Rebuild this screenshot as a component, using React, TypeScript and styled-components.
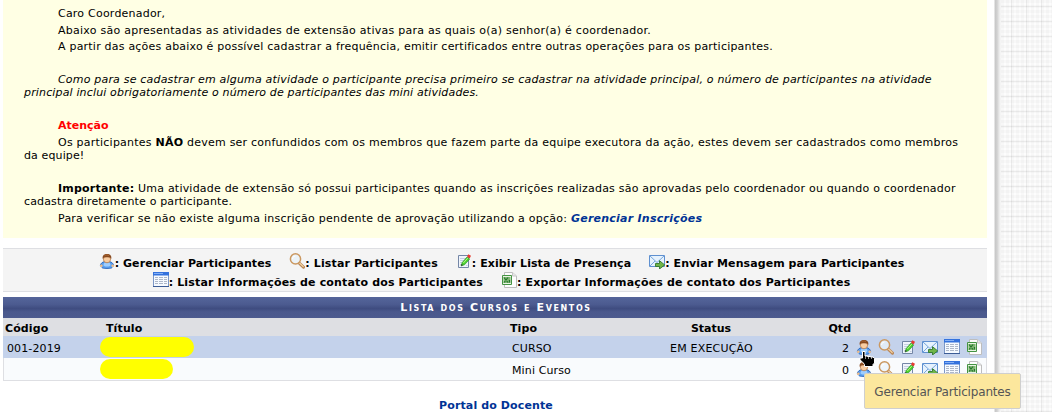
import React from "react";
import styled, { createGlobalStyle } from "styled-components";

const Global = createGlobalStyle`
  * { box-sizing: border-box; }
  html, body { margin: 0; height: 412px; overflow: hidden; }
  body { font: 11px/13px "DejaVu Sans", Verdana, sans-serif; color: #000; background: #fff; }
  svg { display: block; flex: none; }
`;

const Page = styled.div`
  position: relative;
  display: flex;
  width: 1052px;
  height: 412px;
  overflow: hidden;
`;
const Sheet = styled.main`
  width: 994px;
  padding: 0 7px 0 3px;
  flex: none;
`;
const Edge = styled.div`
  width: 7px;
  flex: none;
  background: linear-gradient(90deg, #f4f4f4 0, #c9c9c9 20%, #d2d2d2 45%, #ebebeb 75%, #f8f8f8 100%);
`;
const Backdrop = styled.div`
  flex: 1;
  background-color: #fdfdfd;
  background-image:
    linear-gradient(rgba(0,0,0,.05) 1px, transparent 1px),
    linear-gradient(90deg, rgba(0,0,0,.05) 1px, transparent 1px),
    linear-gradient(rgba(0,0,0,.02) 3px, transparent 3px),
    linear-gradient(90deg, rgba(0,0,0,.02) 3px, transparent 3px);
  background-size: 15px 15px, 15px 15px, 5px 5px, 5px 5px;
  background-position: 0 6px, 10px 0, 0 0, 0 0;
`;
const Notice = styled.section`
  height: 238px;
  padding: 7px 20px 0 21px;
  background: #ffffe4;
`;
const Para = styled.p<{ $gap?: number }>`
  margin: 0 0 ${(p) => p.$gap ?? 3}px;
  text-indent: 34px;
  white-space: nowrap;
`;
const Tracked = styled.span<{ $by: number }>`
  letter-spacing: ${(p) => p.$by}px;
`;
const Warning = styled.strong`
  color: #f00;
`;
const Link = styled.a`
  color: #003395;
  font-weight: bold;
`;
const Legend = styled.section`
  margin-top: 10px;
  height: 44px;
  padding-top: 4px;
  background: #f4f4f4;
  border: solid #dedfe3;
  border-width: 1px 0;
  font-weight: bold;
`;
const LegendRow = styled.div`
  display: flex;
  justify-content: center;
  gap: 18px;
  height: 19px;
  padding-left: 13px;
`;
const LegendItem = styled.span`
  display: flex;
  white-space: pre;
`;
const LegendText = styled.span<{ $by: number }>`
  padding-top: 4px;
  letter-spacing: ${(p) => p.$by}px;
`;
const Listing = styled.section`
  margin-top: 5px;
`;
const Caption = styled.h2`
  margin: 0;
  height: 21px;
  line-height: 22px;
  text-align: center;
  color: #fff;
  font-size: 11px;
  font-variant: small-caps;
  letter-spacing: 1.6px;
  padding-left: 2px;
  background: linear-gradient(#55659a 0, #4c5b90 35%, #3f4c80 55%, #4a588c 70%, #4c5a8e 100%);
`;
const Row = styled.div<{ $kind: "head" | "odd" | "even" }>`
  display: grid;
  grid-template-columns: ${(p) => (p.$kind === "even" ? 96 : 97)}px 410px 140px 126px 73px 7px 1fr;
  align-items: center;
  height: ${(p) => (p.$kind === "head" ? 18 : p.$kind === "even" ? 23 : 22)}px;
  background: ${(p) => ({ head: "#dedfe3", odd: "#c4d2eb", even: "#f9fbfd" })[p.$kind]};
  font-weight: ${(p) => (p.$kind === "head" ? "bold" : "normal")};
  border: solid #dedfe3;
  border-width: ${(p) => (p.$kind === "even" ? "0 1px 1px" : "0")};
`;
const Cell = styled.span<{ $align?: string; $left?: number; $right?: number; $by?: number }>`
  padding: 3px ${(p) => p.$right ?? 0}px 0 ${(p) => p.$left ?? 0}px;
  text-align: ${(p) => p.$align ?? "left"};
  letter-spacing: ${(p) => p.$by ?? 0.12}px;
`;
const QtyHead = styled(Cell)`
  margin-right: -2px;
`;
const Marker = styled.span<{ $w: number }>`
  display: block;
  width: ${(p) => p.$w}px;
  height: 20px;
  border-radius: 10px;
  background: #ff0;
`;
const Actions = styled.span`
  display: flex;
  gap: 6px;
`;
const Footer = styled.footer`
  margin-top: 18px;
  text-align: center;
  padding-left: 2px;
  letter-spacing: 0.12px;
`;
const Tooltip = styled.div`
  position: absolute;
  left: 864px;
  top: 373px;
  width: 157px;
  height: 36px;
  border: 1px solid #cfcfcf;
  border-radius: 2px;
  background: #fce79d;
  color: #555;
  font-size: 12px;
  line-height: 36px;
  letter-spacing: -0.17px;
  text-align: center;
  white-space: nowrap;
`;
const Pointer = styled.svg`
  position: absolute;
  left: 859px;
  top: 350px;
`;

const icon = { width: 16, height: 16, viewBox: "0 0 16 16" };

const UserIcon = () => (
  <svg {...icon}>
    <path d="M1 13C1.500 10.500 3 9 5.500 8.500h5C13 9 14.500 10.500 15 13c-1 1.800-3.500 2.500-7 2.500S2 14.800 1 13z" fill="#5a9fee" />
    <path d="M1.300 12.500C2 10 3.500 9 5.500 8.700M14.700 12.500C14 10 12.500 9 10.500 8.700M3 14.800c2 .9 8 .9 10 0" fill="none" stroke="#2c68bd" strokeWidth=".9" />
    <path d="M4.500 11.500C5 9.500 6 9 8 9.800c2-.8 3-.3 3.500 1.700.3 1.500-1 2-3.500 2s-3.800-.5-3.500-2z" fill="#9dcdff" />
    <circle cx="2.300" cy="12.800" r="1.300" fill="#f3bd88" />
    <circle cx="13.700" cy="12.800" r="1.300" fill="#f3bd88" />
    <ellipse cx="8" cy="6.200" rx="3.600" ry="3.600" fill="#f8cda2" stroke="#b06f38" strokeWidth=".7" />
    <path d="M3.800 6C3 2.500 5 1 8 1s5 1.500 4.200 5L11 4.600 8 4.200 5 4.600z" fill="#87491f" />
    <path d="M5.500 2.800C6.500 1.800 9 1.800 10 2.600" fill="none" stroke="#b5713c" strokeWidth=".8" />
  </svg>
);
const SearchIcon = () => (
  <svg {...icon}>
    <path d="M10.500 10.300l4 3.800" stroke="#b98555" strokeWidth="3" strokeLinecap="round" />
    <path d="M10.500 10l3.700 3.500" stroke="#f2d3a4" strokeWidth="1.200" strokeLinecap="round" />
    <circle cx="6.500" cy="5.900" r="5.100" fill="#eaf3fa" fillOpacity=".75" stroke="#cb9860" strokeWidth="1.500" />
    <path d="M3.500 6a3 3 0 013-3" fill="none" stroke="#fff" />
  </svg>
);
const EditIcon = () => (
  <svg {...icon}>
    <path d="M2.500 2.500h10v12h-10z" fill="#f0f4fb" stroke="#7486a6" />
    <path d="M4 5.500h6M4 7.500h4M4 9.500h3M4 11.500h1M10 12.500h1.500" stroke="#c4d0e2" />
    <path d="M5 13l1.200-3.500L11 4l2.700 2L8.500 11.800z" fill="#4bd22f" stroke="#278b24" strokeWidth=".6" />
    <path d="M7.300 10l4.500-5" stroke="#b5f580" />
    <path d="M11 3.500l1.300-2.200 2.700 1.500-1.300 2.700z" fill="#e63b2e" />
    <path d="M5 13l.5-2 1.500 1z" fill="#333" />
  </svg>
);
const MailIcon = () => (
  <svg {...icon}>
    <path d="M.5 2.500h15v11H.5z" fill="#e6f2fd" stroke="#5f90d0" />
    <path d="M1 13l5-5M15 13l-5-5M1 3l7 6.500L15 3" fill="none" stroke="#78a7dd" />
    <path d="M6.500 10.500h4V7.700l5.200 4.200-5.200 4.100v-2.500h-4z" fill="#70b548" stroke="#32782d" strokeWidth=".9" />
  </svg>
);
const TableIcon = () => (
  <svg {...icon}>
    <path d="M.5.5h15v14H.5z" fill="#f6faff" stroke="#7c97c6" />
    <path d="M0 0h16v3.500H0z" fill="#3472dd" />
    <path d="M1 1h9v1H1z" fill="#83aff5" />
    <path d="M2 5.500h3M6 5.500h4M11 5.500h3M2 7.500h3M6 7.500h4M11 7.500h3M2 9.500h3M6 9.500h4M11 9.500h3M2 11.500h3M6 11.500h4M11 11.500h3" stroke="#adb7c9" />
    <path d="M0 14.500h16" stroke="#3c5c96" />
  </svg>
);
const SheetIcon = () => (
  <svg {...icon}>
    <path d="M3.500.5h8L15.500 4v11.500h-12z" fill="#fdfdfd" stroke="#bdbdbd" />
    <path d="M11.500.5V4h4" fill="#e9e9e9" stroke="#c4c4c4" />
    <path d="M1.500 3.500h9v9h-9z" fill="#e8f4e2" stroke="#449343" />
    <path d="M2.500 5h7v6h-7z" fill="#7fb572" />
    <path d="M3 5.500l4 5M7 5.500l-4 5M8.500 8v2.500" stroke="#24772b" strokeWidth="1.200" />
  </svg>
);

const legend = [
  [
    [UserIcon, "Gerenciar Participantes", 0.08],
    [SearchIcon, "Listar Participantes", 0.12],
    [EditIcon, "Exibir Lista de Presença", 0.08],
    [MailIcon, "Enviar Mensagem para Participantes", 0.08],
  ],
  [
    [TableIcon, "Listar Informações de contato dos Participantes", 0.16],
    [SheetIcon, "Exportar Informações de contato dos Participantes", 0.17],
  ],
] as [React.FC, string, number][][];

const RowActions = () => (
  <Actions>
    <UserIcon />
    <SearchIcon />
    <EditIcon />
    <MailIcon />
    <TableIcon />
    <SheetIcon />
  </Actions>
);

export default function App() {
  return (
    <Page>
      <Global />
      <Sheet>
        <Notice>
          <Para $gap={4}><Tracked $by={0.22}>Caro Coordenador,</Tracked></Para>
          <Para>
            <Tracked $by={0.255}>Abaixo são apresentadas as atividades de extensão ativas para as quais o(a) senhor(a) é coordenador.</Tracked>
          </Para>
          <Para $gap={20}>
            <Tracked $by={0.214}>A partir das ações abaixo é possível cadastrar a frequência, emitir certificados entre outras operações para os participantes.</Tracked>
          </Para>
          <Para $gap={20}>
            <em>
              <Tracked $by={0.19}>Como para se cadastrar em alguma atividade o participante precisa primeiro se cadastrar na atividade principal, o número de participantes na atividade</Tracked>
              <br />
              <Tracked $by={0.15}>principal inclui obrigatoriamente o número de participantes das mini atividades.</Tracked>
            </em>
          </Para>
          <Para $gap={4}><Warning>Atenção</Warning></Para>
          <Para $gap={20}>
            <Tracked $by={0.23}>
              Os participantes <b>NÃO</b> devem ser confundidos com os membros que fazem parte da equipe executora da ação, estes devem ser cadastrados como membros
            </Tracked>
            <br />
            <Tracked $by={0.12}>da equipe!</Tracked>
          </Para>
          <Para $gap={4}>
            <Tracked $by={0.21}>
              <b>Importante:</b> Uma atividade de extensão só possui participantes quando as inscrições realizadas são aprovadas pelo coordenador ou quando o coordenador
            </Tracked>
            <br />
            <Tracked $by={0.15}>cadastra diretamente o participante.</Tracked>
          </Para>
          <Para>
            <Tracked $by={0.24}>
              Para verificar se não existe alguma inscrição pendente de aprovação utilizando a opção: <Link><em>Gerenciar Inscrições</em></Link>
            </Tracked>
          </Para>
        </Notice>
        <Legend>
          {legend.map((row, i) => (
            <LegendRow key={i}>
              {row.map(([Icon, text, by]) => (
                <LegendItem key={text}>
                  <Icon />
                  <LegendText $by={by}>: {text}</LegendText>
                </LegendItem>
              ))}
            </LegendRow>
          ))}
        </Legend>
        <Listing>
          <Caption>Lista dos Cursos e Eventos</Caption>
          <Row $kind="head">
            <Cell $left={2}>Código</Cell>
            <Cell $left={6}>Título</Cell>
            <Cell>Tipo</Cell>
            <Cell $align="center" $right={4} $by={0}>Status</Cell>
            <QtyHead $align="right" $by={0}>Qtd</QtyHead>
          </Row>
          <Row $kind="odd">
            <Cell $left={4}>001-2019</Cell>
            <Marker $w={94} />
            <Cell $left={2}>CURSO</Cell>
            <Cell $align="center" $right={3} $by={0.2}>EM EXECUÇÃO</Cell>
            <Cell $align="right">2</Cell>
            <span />
            <RowActions />
          </Row>
          <Row $kind="even">
            <span />
            <Marker $w={73} />
            <Cell $left={2}>Mini Curso</Cell>
            <span />
            <Cell $align="right">0</Cell>
            <span />
            <RowActions />
          </Row>
        </Listing>
        <Footer><Link>Portal do Docente</Link></Footer>
      </Sheet>
      <Edge />
      <Backdrop />
      <Tooltip>Gerenciar Participantes</Tooltip>
      <Pointer width="17" height="17" viewBox="0 0 17 17">
        <path
          d="M3.500 1.500h2.500V6h2.500v.5h3V7H14l1.500 1.500V13L14 14.500v2H5.500v-2L3.500 12 1 10V8h2.500z"
          fill="#000"
          stroke="#fff"
          strokeLinejoin="round"
        />
        <path d="M6.500 6v3M9.500 6.500v2.500M12.500 7v2" stroke="#fff" strokeWidth=".6" />
      </Pointer>
    </Page>
  );
}
